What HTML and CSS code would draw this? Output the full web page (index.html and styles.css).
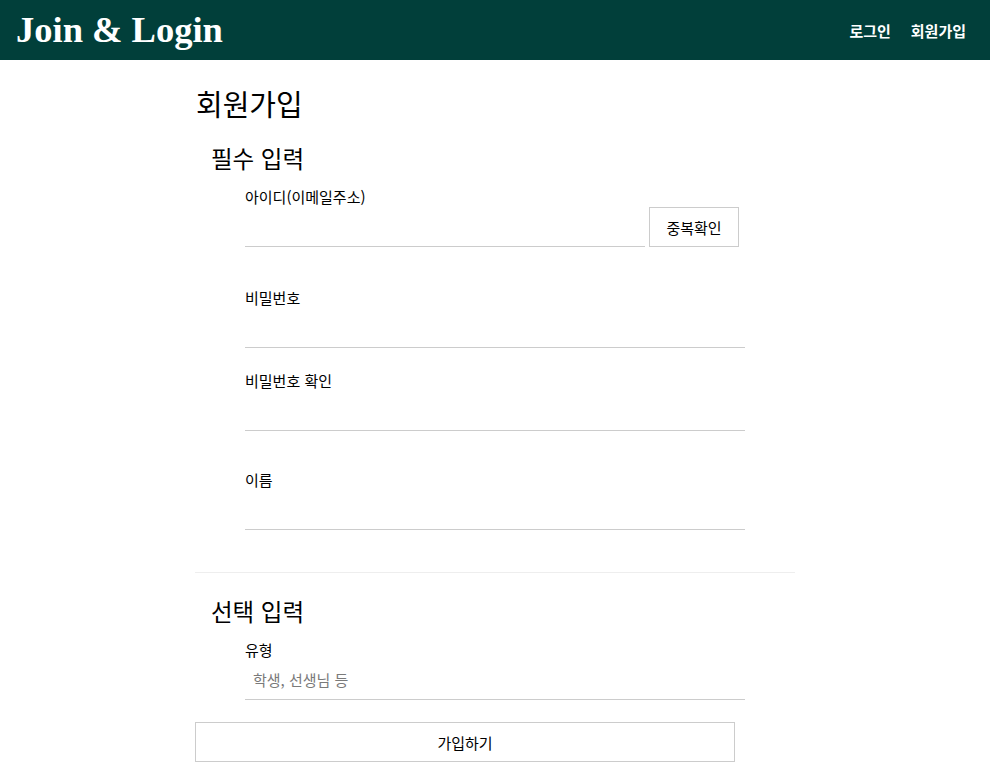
FILE: index.html
```html
<!DOCTYPE html>
<html lang="ko">
<head>
<meta charset="utf-8">
<title>Join &amp; Login</title>
<link rel="stylesheet" href="styles.css">
</head>
<body>
<header class="topbar">
  <div class="brand">Join &amp; Login</div>
  <nav class="nav">
    <a class="nav-link" href="#">로그인</a>
    <a class="nav-link" href="#">회원가입</a>
  </nav>
</header>
<main class="page">
  <h1 class="page-title">회원가입</h1>
  <section class="group">
    <h2 class="group-title">필수 입력</h2>
    <div class="fields">
      <div class="field field-msg">
        <label class="label">아이디(이메일주소)</label>
        <div class="row">
          <input class="input input-short" type="text">
          <button class="btn-check" type="button">중복확인</button>
        </div>
      </div>
      <div class="field">
        <label class="label">비밀번호</label>
        <input class="input" type="password">
      </div>
      <div class="field field-msg2">
        <label class="label">비밀번호 확인</label>
        <input class="input" type="password">
      </div>
      <div class="field">
        <label class="label">이름</label>
        <input class="input" type="text">
      </div>
    </div>
  </section>
  <hr class="divider">
  <section class="group">
    <h2 class="group-title">선택 입력</h2>
    <div class="fields">
      <div class="field">
        <label class="label">유형</label>
        <input class="input" type="text" placeholder="학생, 선생님 등">
      </div>
    </div>
  </section>
  <button class="btn-submit" type="button">가입하기</button>
</main>
</body>
</html>
```
FILE: styles.css
```css
* { box-sizing: border-box; }
body {
  margin: 0;
  font-family: "Noto Sans CJK KR", "Noto Sans", sans-serif;
  color: #000;
  background: #fff;
}
.topbar {
  height: 60px;
  background: #013f3a;
  display: flex;
  align-items: center;
  justify-content: space-between;
  padding: 0 24px 0 16px;
}
.brand {
  font-family: "Liberation Serif", "DejaVu Serif", serif;
  font-weight: 700;
  font-size: 36.5px;
  line-height: 60px;
  color: #fff;
}
.nav {
  display: flex;
  gap: 20px;
}
.nav-link {
  color: #fff;
  text-decoration: none;
  font-size: 15px;
  font-weight: 700;
}
.page {
  width: 600px;
  margin: 0 auto;
}
.page-title {
  font-size: 29px;
  font-weight: 400;
  line-height: 36px;
  margin: 25px 0 0 1px;
}
.group-title {
  font-size: 23.5px;
  font-weight: 400;
  line-height: 30px;
  margin: 22px 0 0 16px;
}
.fields {
  padding-left: 50px;
  width: 550px;
  margin-top: 15px;
}
.field {
  margin-bottom: 24px;
}
.field:last-child { margin-bottom: 0; }
.field-msg { margin-bottom: 42px; }
.field-msg2 { margin-bottom: 40px; }
.label {
  display: block;
  font-size: 15px;
  line-height: 18px;
}
.input {
  display: block;
  width: 500px;
  height: 41px;
  border: none;
  border-bottom: 1px solid #cccccc;
  outline: none;
  padding: 0 8px;
  font-family: inherit;
  font-size: 15px;
  background: transparent;
}
.input::placeholder { color: #7a7a7a; }
.row {
  display: flex;
  align-items: flex-end;
  gap: 4px;
}
.input-short { width: 400px; }
.btn-check {
  width: 90px;
  height: 40px;
  background: #fff;
  border: 1px solid #cccccc;
  font-family: inherit;
  font-size: 15px;
  color: #000;
  padding: 0;
}
.divider {
  border: none;
  border-top: 1px solid #eeeeee;
  margin: 42px 0 0 0;
  height: 0;
}
.group + .divider + .group .group-title { margin-top: 23px; }
.btn-submit {
  display: block;
  width: 540px;
  height: 40px;
  margin-top: 22px;
  background: #fff;
  border: 1px solid #cccccc;
  font-family: inherit;
  font-size: 15px;
  color: #000;
}
```
